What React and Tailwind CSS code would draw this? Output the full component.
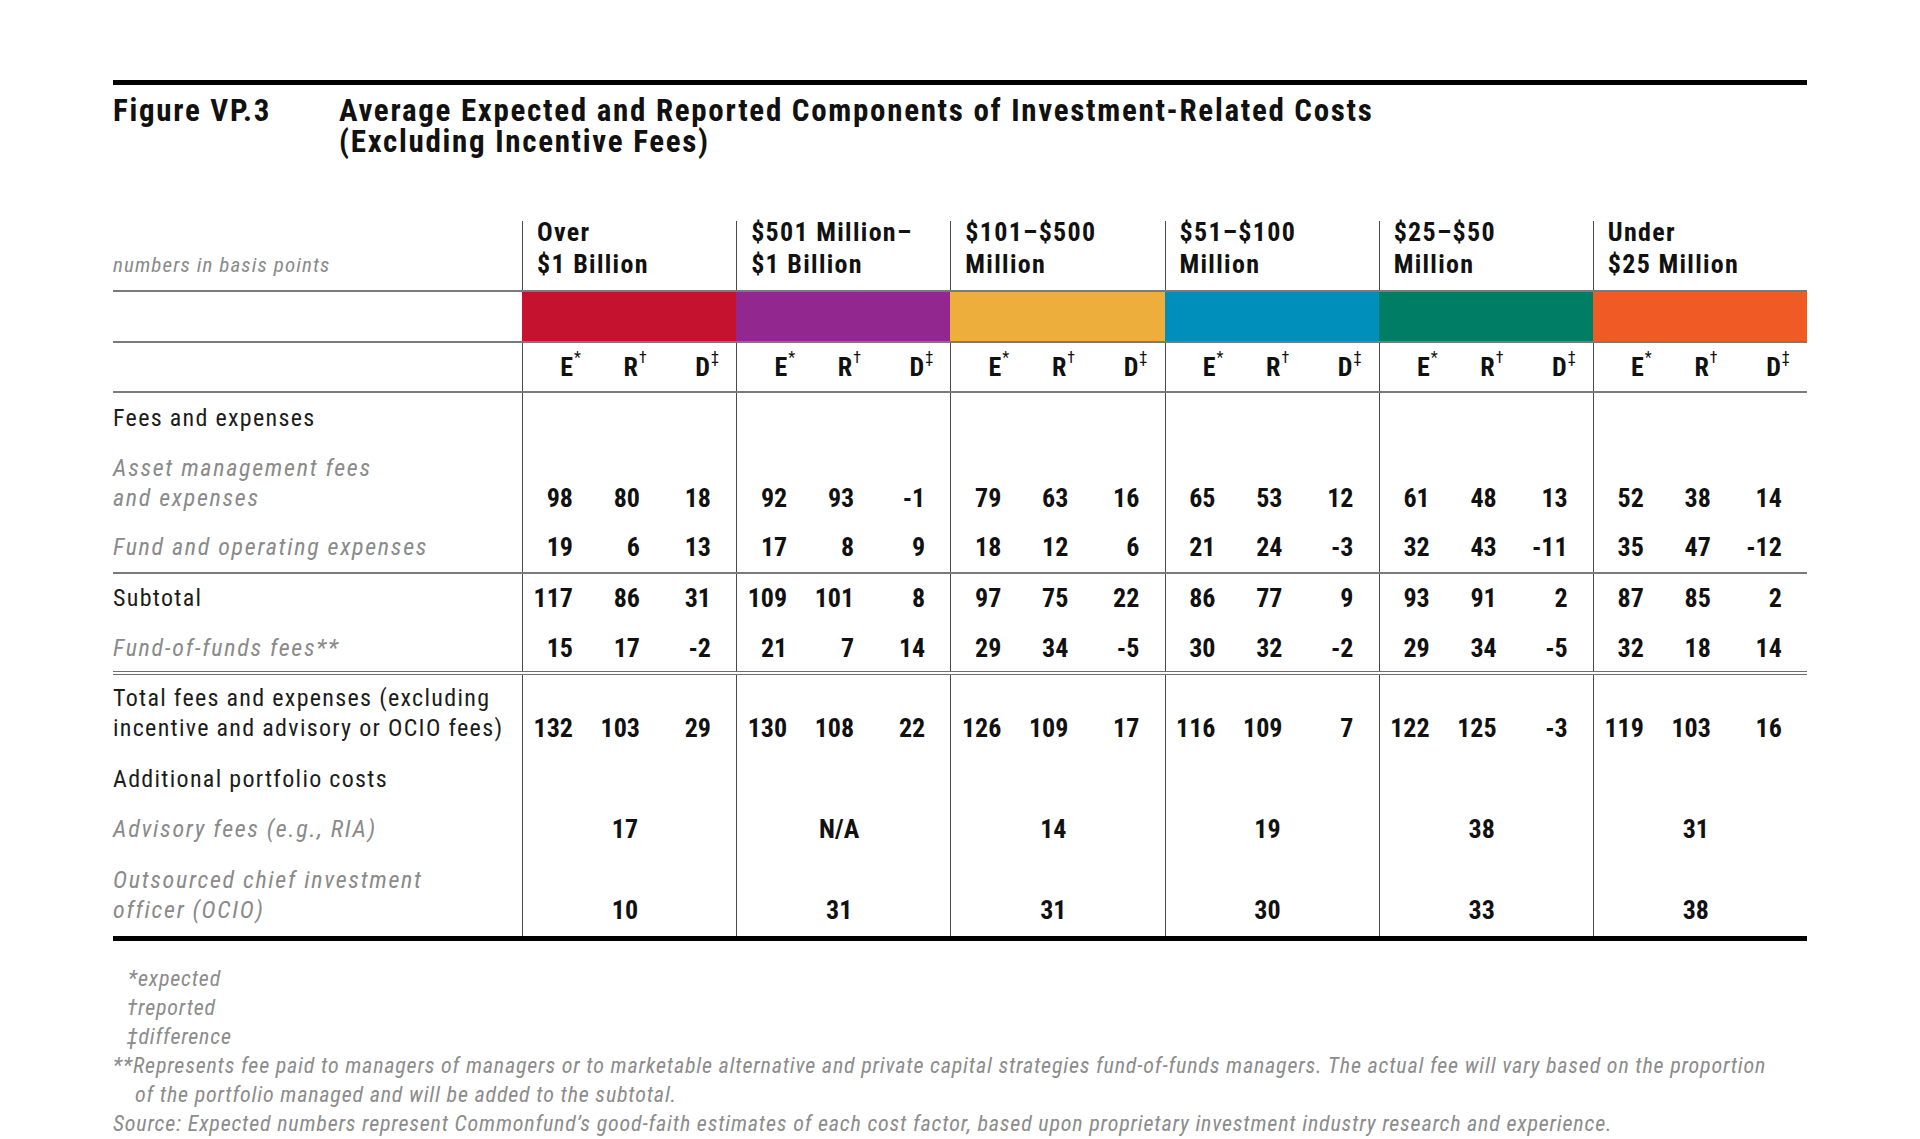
import React from "react";

const NARROW = "font-['Roboto_Condensed','Roboto','Liberation_Sans',sans-serif] [font-stretch:75%]";

const groups = [
  { top: "Over", bottom: "$1 Billion", color: "bg-[#c4122f]" },
  { top: "$501 Million–", bottom: "$1 Billion", color: "bg-[#92278f]" },
  { top: "$101–$500", bottom: "Million", color: "bg-[#eeae3b]" },
  { top: "$51–$100", bottom: "Million", color: "bg-[#008ebb]" },
  { top: "$25–$50", bottom: "Million", color: "bg-[#007d65]" },
  { top: "Under", bottom: "$25 Million", color: "bg-[#f05a24]" },
];

const rows = [
  { label: ["Fees and expenses"], h: "h-[50px]", pb: "pb-[10px]" },
  {
    label: ["Asset management fees", "and expenses"],
    italic: true,
    h: "h-[80px]",
    pb: "pb-[10px]",
    data: [[98, 80, 18], [92, 93, -1], [79, 63, 16], [65, 53, 12], [61, 48, 13], [52, 38, 14]],
  },
  {
    label: ["Fund and operating expenses"],
    italic: true,
    h: "h-[49px]",
    pb: "pb-[10px]",
    data: [[19, 6, 13], [17, 8, 9], [18, 12, 6], [21, 24, -3], [32, 43, -11], [35, 47, -12]],
    line: "single",
  },
  {
    label: ["Subtotal"],
    h: "h-[49px]",
    pb: "pb-[10px]",
    data: [[117, 86, 31], [109, 101, 8], [97, 75, 22], [86, 77, 9], [93, 91, 2], [87, 85, 2]],
  },
  {
    label: ["Fund-of-funds fees**"],
    italic: true,
    h: "h-[48px]",
    pb: "pb-[8px]",
    data: [[15, 17, -2], [21, 7, 14], [29, 34, -5], [30, 32, -2], [29, 34, -5], [32, 18, 14]],
    line: "double",
  },
  {
    label: ["Total fees and expenses (excluding", "incentive and advisory or OCIO fees)"],
    h: "h-[80px]",
    pb: "pb-[12px]",
    data: [[132, 103, 29], [130, 108, 22], [126, 109, 17], [116, 109, 7], [122, 125, -3], [119, 103, 16]],
  },
  { label: ["Additional portfolio costs"], h: "h-[50px]", pb: "pb-[11px]" },
  {
    label: ["Advisory fees (e.g., RIA)"],
    italic: true,
    h: "h-[50px]",
    pb: "pb-[11px]",
    single: ["17", "N/A", "14", "19", "38", "31"],
  },
  {
    label: ["Outsourced chief investment", "officer (OCIO)"],
    italic: true,
    h: "h-[81px]",
    pb: "pb-[11px]",
    single: ["10", "31", "31", "30", "33", "38"],
  },
];

const Rule = ({ kind }) => {
  if (kind === "double")
    return (
      <div className="flex flex-col gap-[2px]">
        <div className="h-px bg-[#6f6f6f]" />
        <div className="h-px bg-[#6f6f6f]" />
      </div>
    );
  return <div className="h-[2px] bg-[#7a7a7a]" />;
};

const Sup = ({ children }) => (
  <span className="relative">
    <span className="absolute left-[1px] top-[-2px] text-[16px] leading-none font-normal">{children}</span>
  </span>
);

const Row = ({ row }) => (
  <>
    <div className={`grid grid-cols-[409px_repeat(6,1fr)] ${row.h}`}>
      <div
        className={`flex flex-col justify-end ${row.pb} text-[24px] leading-[30px] ${
          row.italic ? "italic text-[#8a8a8a] tracking-[1.7px]" : "text-[#1c1c1c] tracking-[1.3px]"
        }`}
      >
        {row.label.map((l) => (
          <div key={l} className="whitespace-nowrap">{l}</div>
        ))}
      </div>
      {groups.map((g, i) => (
        <div
          key={g.color}
          className={`border-l border-[#4a4a4a] flex items-end ${row.pb} text-[26px] leading-[30px] font-bold text-[#111]`}
        >
          {row.data && (
            <div className="flex">
              <span className="w-[50px] text-right">{row.data[i][0]}</span>
              <span className="w-[67px] text-right">{row.data[i][1]}</span>
              <span className="w-[71px] text-right">{row.data[i][2]}</span>
            </div>
          )}
          {row.single && <div className="w-[204px] text-center">{row.single[i]}</div>}
        </div>
      ))}
    </div>
    {row.line && <Rule kind={row.line} />}
  </>
);

export default function App() {
  return (
    <div className={`w-[1920px] min-h-[1139px] bg-white ${NARROW}`}>
      <div className="ml-[113px] w-[1694px] pt-[80px]">
        <div className="h-[5px] bg-black" />

        <div className="mt-[10px] h-[63px] flex text-[31px] leading-[31px] font-bold text-[#111] tracking-[1.7px]">
          <div className="w-[226px] whitespace-nowrap">Figure VP.3</div>
          <div className="whitespace-nowrap">
            <div>Average Expected and Reported Components of Investment-Related Costs</div>
            <div>(Excluding Incentive Fees)</div>
          </div>
        </div>

        <div className="mt-[63px] grid grid-cols-[409px_repeat(6,1fr)] h-[69px]">
          <div className="flex items-end pb-[10px] italic text-[21px] leading-[30px] tracking-[1.1px] text-[#8a8a8a]">
            numbers in basis points
          </div>
          {groups.map((g) => (
            <div key={g.color} className="border-l border-[#4a4a4a] pl-[14px]">
              <div className="-mt-[5px] text-[26px] leading-[32px] font-bold tracking-[1.3px] text-[#111] whitespace-nowrap">
                <div>{g.top}</div>
                <div>{g.bottom}</div>
              </div>
            </div>
          ))}
        </div>
        <Rule />

        <div className="grid grid-cols-[409px_repeat(6,1fr)] h-[49px]">
          <div />
          {groups.map((g) => (
            <div key={g.color} className={g.color} />
          ))}
        </div>
        <Rule />

        <div className="grid grid-cols-[409px_repeat(6,1fr)] h-[48px]">
          <div />
          {groups.map((g) => (
            <div key={g.color} className="border-l border-[#4a4a4a] flex items-center text-[26px] leading-[30px] font-bold text-[#111]">
              <span className="w-[50px] text-right">E<Sup>*</Sup></span>
              <span className="w-[65px] text-right">R<Sup>†</Sup></span>
              <span className="w-[72px] text-right">D<Sup>‡</Sup></span>
            </div>
          ))}
        </div>
        <Rule />

        {rows.map((r) => (
          <Row key={r.label[0]} row={r} />
        ))}

        <div className="h-[5px] bg-black" />

        <div className="mt-[23px] italic text-[22px] leading-[29px] tracking-[0.8px] text-[#8c8c8c] whitespace-nowrap">
          <div className="pl-[15px]">*expected</div>
          <div className="pl-[14px]">†reported</div>
          <div className="pl-[14px]">‡difference</div>
          <div>
            **Represents fee paid to managers of managers or to marketable alternative and private capital strategies fund-of-funds managers. The actual fee will vary based on the proportion
          </div>
          <div className="pl-[22px]">of the portfolio managed and will be added to the subtotal.</div>
          <div>
            Source: Expected numbers represent Commonfund’s good-faith estimates of each cost factor, based upon proprietary investment industry research and experience.
          </div>
        </div>
      </div>
    </div>
  );
}
